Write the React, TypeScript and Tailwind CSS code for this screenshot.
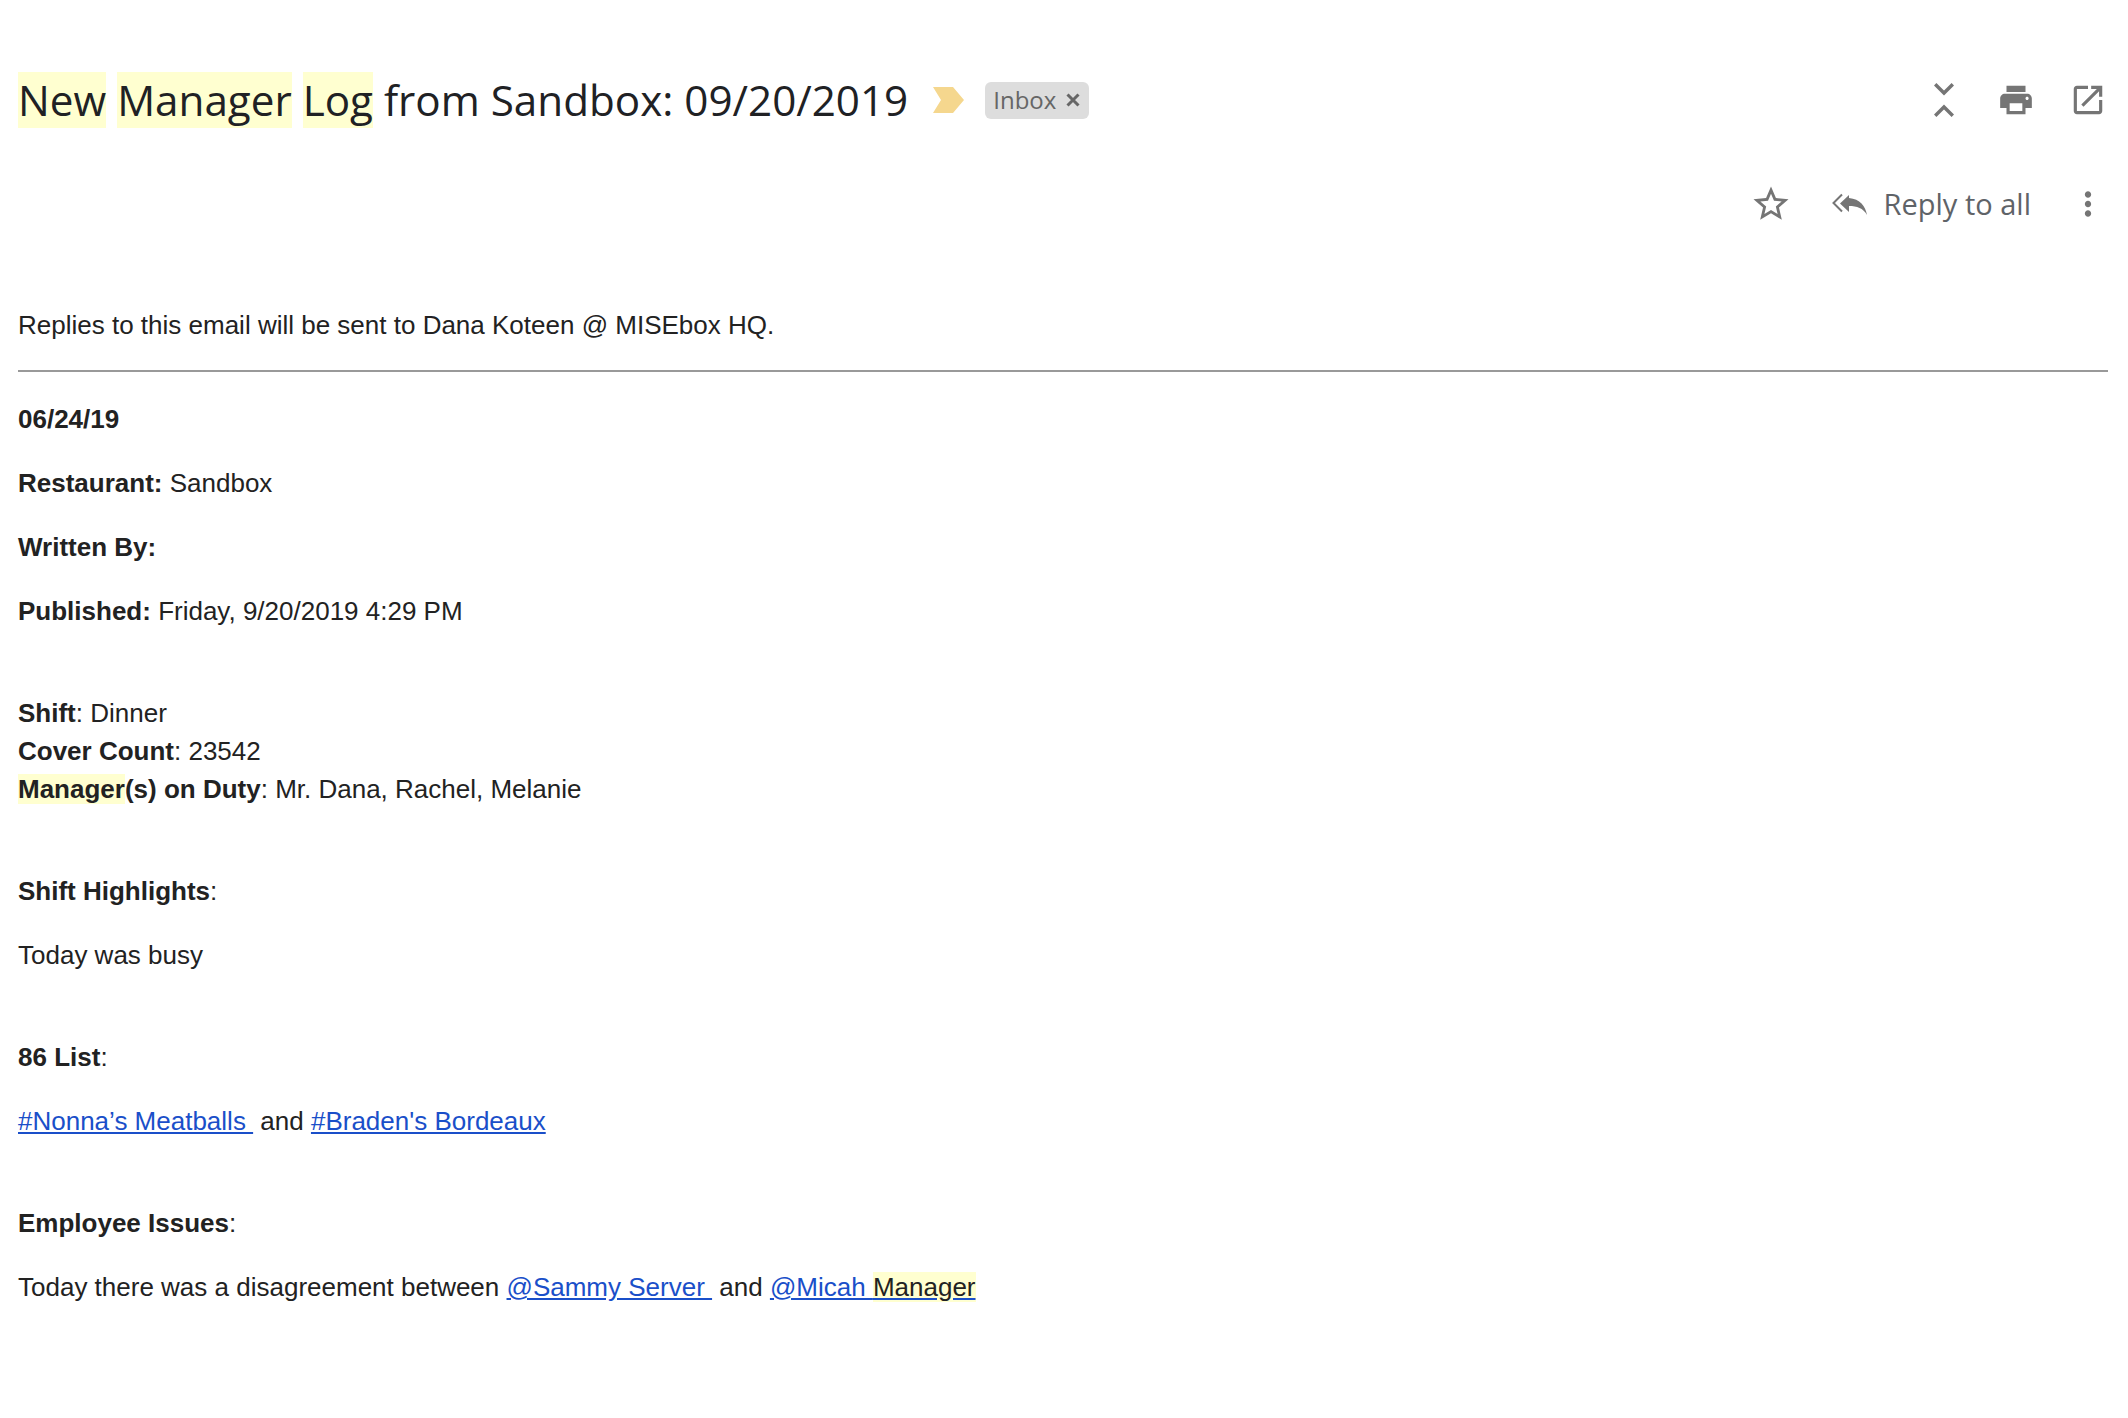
const hl = "bg-[#ffffd0]";
const titleHl = "inline-block h-[56px] leading-[56px] bg-[#ffffd0]";
const link = "text-[#1a4fc9] underline";

function Icon({ d, size, className = "" }: { d: string; size: number; className?: string }) {
  return (
    <svg width={size} height={size} viewBox="0 0 24 24" className={className} fill="currentColor">
      <path d={d} />
    </svg>
  );
}

const paths = {
  print: "M19 8H5c-1.66 0-3 1.34-3 3v6h4v4h12v-4h4v-6c0-1.66-1.34-3-3-3zm-3 11H8v-5h8v5zm3-7c-.55 0-1-.45-1-1s.45-1 1-1 1 .45 1 1-.45 1-1 1zm-1-9H6v4h12V3z",
  open: "M19 19H5V5h7V3H5c-1.11 0-2 .9-2 2v14c0 1.1.89 2 2 2h14c1.1 0 2-.9 2-2v-7h-2v7zM14 3v2h3.59l-9.83 9.83 1.41 1.41L19 6.41V10h2V3h-7z",
  star: "M22 9.24l-7.19-.62L12 2 9.19 8.63 2 9.24l5.46 4.73L5.82 21 12 17.27 18.18 21l-1.63-7.03L22 9.24zM12 15.4l-3.76 2.27 1-4.28-3.32-2.88 4.38-.38L12 6.1l1.71 4.04 4.38.38-3.32 2.88 1 4.28L12 15.4z",
  more: "M12 8c1.1 0 2-.9 2-2s-.9-2-2-2-2 .9-2 2 .9 2 2 2zm0 2c-1.1 0-2 .9-2 2s.9 2 2 2 2-.9 2-2-.9-2-2-2zm0 6c-1.1 0-2 .9-2 2s.9 2 2 2 2-.9 2-2-.9-2-2-2z",
};

// collapse-all: two thin chevrons pointing at each other
function CollapseAll() {
  return (
    <svg width="20" height="34" viewBox="0 0 20 34" fill="none" stroke="currentColor" strokeWidth="3.4">
      <path d="M1.2 1.2L10 10l8.8-8.8M1.2 32.8L10 24l8.8 8.8" />
    </svg>
  );
}

// gmail's reply-all: thin outer chevron, solid inner arrow
function ReplyAll() {
  return (
    <svg width="36" height="26" viewBox="0 0 36 26" className="mr-[16px]" fill="currentColor">
      <path d="M10 3.5L1.5 12l8.5 8.5" fill="none" stroke="currentColor" strokeWidth="2" />
      <path d="M17 4L8 12.5l9 8.5v-6c8 0 14 2 18 9-1.5-9-7-16-18-17z" />
    </svg>
  );
}

function Header() {
  return (
    <div className="flex items-center h-[56px] mt-[72px] pl-[18px] pr-[4px] justify-between">
      <div className="flex items-center">
        <h1 className="text-[42.2px] leading-[56px] whitespace-pre text-[#202124] font-['Open_Sans',sans-serif]">
          <span className={titleHl}>New</span> <span className={titleHl}>Manager</span> <span className={titleHl}>Log</span> from Sandbox: 09/20/2019
        </h1>
        <svg width="32" height="28" viewBox="0 0 32 28" className="ml-[24px]">
          <polygon points="1,1 21,1 32,14 21,27 1,27 9,14" fill="#f5d78e" />
        </svg>
        <span className="ml-[21px] flex items-center h-[37px] w-[104px] pl-[8px] rounded-[6px] bg-[#dddddd] text-[#666666] text-[24px] font-['Open_Sans',sans-serif]">
          Inbox
          <svg width="14" height="14" viewBox="0 0 14 14" className="ml-[10px]" stroke="#666666" strokeWidth="3">
            <path d="M1.5 1.5l11 11M12.5 1.5l-11 11" />
          </svg>
        </span>
      </div>
      <div className="flex items-center text-[#757575]">
        <div className="w-[72px] flex justify-center"><CollapseAll /></div>
        <div className="w-[72px] flex justify-center"><Icon d={paths.print} size={38} /></div>
        <div className="w-[72px] flex justify-center"><Icon d={paths.open} size={38} /></div>
      </div>
    </div>
  );
}

function Actions() {
  return (
    <div className="flex items-center justify-end h-[44px] mt-[54px] pr-[4px] text-[#757575]">
      <Icon d={paths.star} size={42} className="mr-[40px]" />
      <ReplyAll />
      <span className="text-[29px] text-[#5f6368] font-['Open_Sans',sans-serif] mr-[21px]">Reply to all</span>
      <div className="w-[72px] flex justify-center"><Icon d={paths.more} size={38} /></div>
    </div>
  );
}

function Line({ children, className = "" }: { children: React.ReactNode; className?: string }) {
  return <p className={`leading-[38px] ${className}`}>{children}</p>;
}

export default function App() {
  return (
    <div className="min-h-[1418px] bg-white overflow-hidden">
      <Header />
      <Actions />
      <div className="pl-[18px] pr-[20px] mt-[80px] text-[26px] text-[#222222] font-['Liberation_Sans',Arial,sans-serif]">
        <Line>Replies to this email will be sent to Dana Koteen @ MISEbox HQ.</Line>
        <hr className="mt-[26px] mb-[28px] border-t-2 border-[#999999]" />
        <Line className="font-bold">06/24/19</Line>
        <Line className="mt-[26px]"><b>Restaurant:</b> Sandbox</Line>
        <Line className="mt-[26px]"><b>Written By:</b></Line>
        <Line className="mt-[26px]"><b>Published:</b> Friday, 9/20/2019 4:29 PM</Line>
        <Line className="mt-[64px]"><b>Shift</b>: Dinner</Line>
        <Line><b>Cover Count</b>: 23542</Line>
        <Line><b><span className={hl}>Manager</span>(s) on Duty</b>: Mr. Dana, Rachel, Melanie</Line>
        <Line className="mt-[64px]"><b>Shift Highlights</b>:</Line>
        <Line className="mt-[26px]">Today was busy</Line>
        <Line className="mt-[64px]"><b>86 List</b>:</Line>
        <Line className="mt-[26px]">
          <a className={link}>#Nonna’s Meatballs&nbsp;</a> and <a className={link}>#Braden's Bordeaux</a>
        </Line>
        <Line className="mt-[64px]"><b>Employee Issues</b>:</Line>
        <Line className="mt-[26px]">
          Today there was a disagreement between <a className={link}>@Sammy Server&nbsp;</a> and{" "}
          <a className={link}>@Micah <span className={`${hl} text-[#222222]`}>Manager</span></a>
        </Line>
      </div>
    </div>
  );
}
